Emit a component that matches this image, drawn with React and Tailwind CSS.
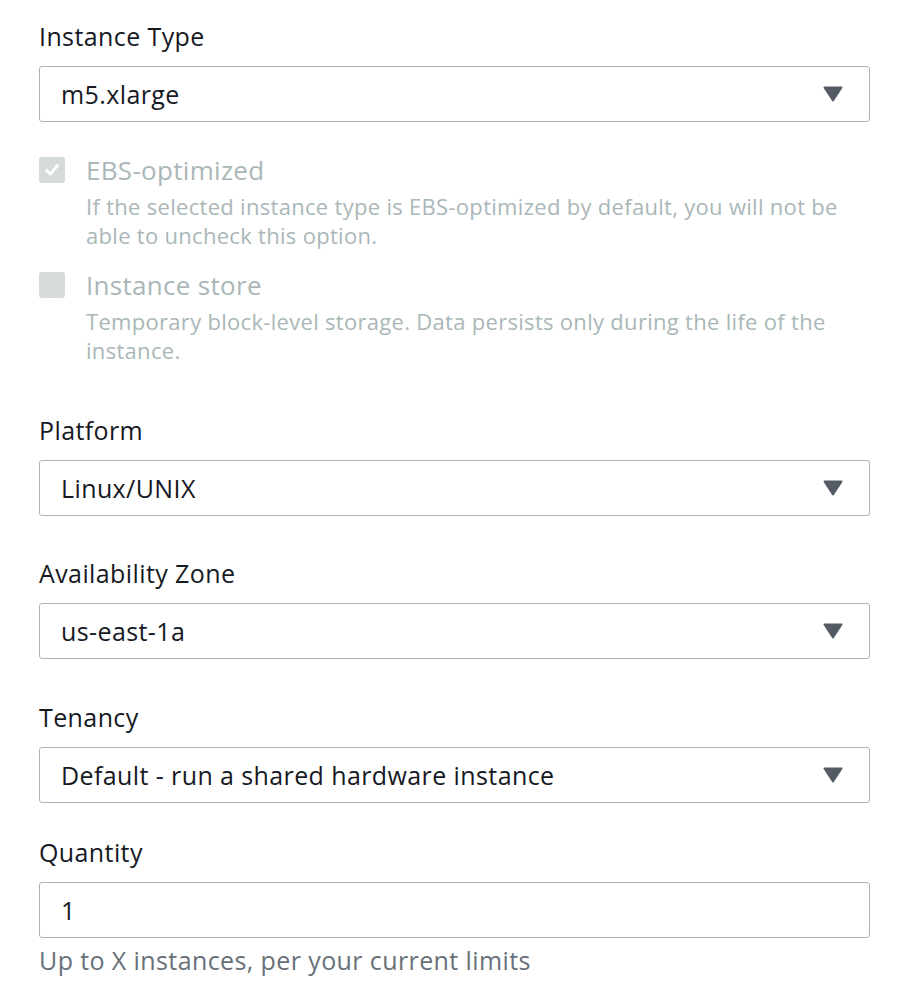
import React from "react";

const font = { fontFamily: '"Open Sans", "Noto Sans", sans-serif' };

function Caret() {
  return (
    <svg width="20" height="16" viewBox="0 0 20 16" className="shrink-0">
      <path d="M1.5 1.5 H18.5 L10 14.5 Z" fill="#545b64" stroke="#545b64" strokeWidth="2" strokeLinejoin="round" />
    </svg>
  );
}

function SelectField({ label, value, className = "" }) {
  return (
    <div className={"flex flex-col " + className}>
      <div className="text-[25px] leading-[32px] tracking-[0.4px] text-[#16191f]">{label}</div>
      <div className="mt-[14px] flex h-[56px] items-center justify-between rounded-[3px] border border-[#aab7b8] bg-white pl-[21px] pr-[26px]">
        <span className="text-[25px] leading-[32px] tracking-[0.4px] text-[#16191f]">{value}</span>
        <Caret />
      </div>
    </div>
  );
}

function CheckItem({ checked, label, desc, className = "" }) {
  return (
    <div className={"flex " + className}>
      <div className="mt-[3px] flex h-[26px] w-[26px] shrink-0 items-center justify-center rounded-[3px] bg-[#d5dbdb]">
        {checked && (
          <svg width="18" height="18" viewBox="0 0 18 18">
            <path d="M3.5 9.5 L7.2 13 L14.5 4.5" fill="none" stroke="white" strokeWidth="2.8" strokeLinecap="round" strokeLinejoin="round" />
          </svg>
        )}
      </div>
      <div className="ml-[21px] flex flex-col">
        <div className="text-[26px] leading-[32px] tracking-[0.3px] text-[#aab7b8]">{label}</div>
        <div className="mt-[6px] text-[22px] leading-[29px] tracking-[0.3px] text-[#aab7b8]">{desc}</div>
      </div>
    </div>
  );
}

export default function App() {
  return (
    <div className="min-h-[992px] w-[904px] bg-white" style={font}>
      <div className="flex w-[870px] flex-col pl-[39px] pt-[20px]">
        <SelectField label="Instance Type" value="m5.xlarge" />
        <CheckItem
          className="mt-[32px]"
          checked
          label="EBS-optimized"
          desc={<>If the selected instance type is EBS-optimized by default, you will not be<br />able to uncheck this option.</>}
        />
        <CheckItem
          className="mt-[19px]"
          label="Instance store"
          desc={<>Temporary block-level storage. Data persists only during the life of the<br />instance.</>}
        />
        <SelectField className="mt-[49px]" label="Platform" value="Linux/UNIX" />
        <SelectField className="mt-[41px]" label="Availability Zone" value="us-east-1a" />
        <SelectField className="mt-[42px]" label="Tenancy" value="Default - run a shared hardware instance" />
        <div className="mt-[33px] flex flex-col">
          <div className="text-[25px] leading-[32px] tracking-[0.4px] text-[#16191f]">Quantity</div>
          <div className="mt-[14px] flex h-[56px] items-center rounded-[3px] border border-[#aab7b8] bg-white pl-[21px]">
            <span className="text-[25px] leading-[32px] tracking-[0.4px] text-[#16191f]">1</span>
          </div>
          <div className="mt-[6px] text-[25px] leading-[32px] tracking-[0.4px] text-[#687078]">Up to X instances, per your current limits</div>
        </div>
      </div>
    </div>
  );
}
